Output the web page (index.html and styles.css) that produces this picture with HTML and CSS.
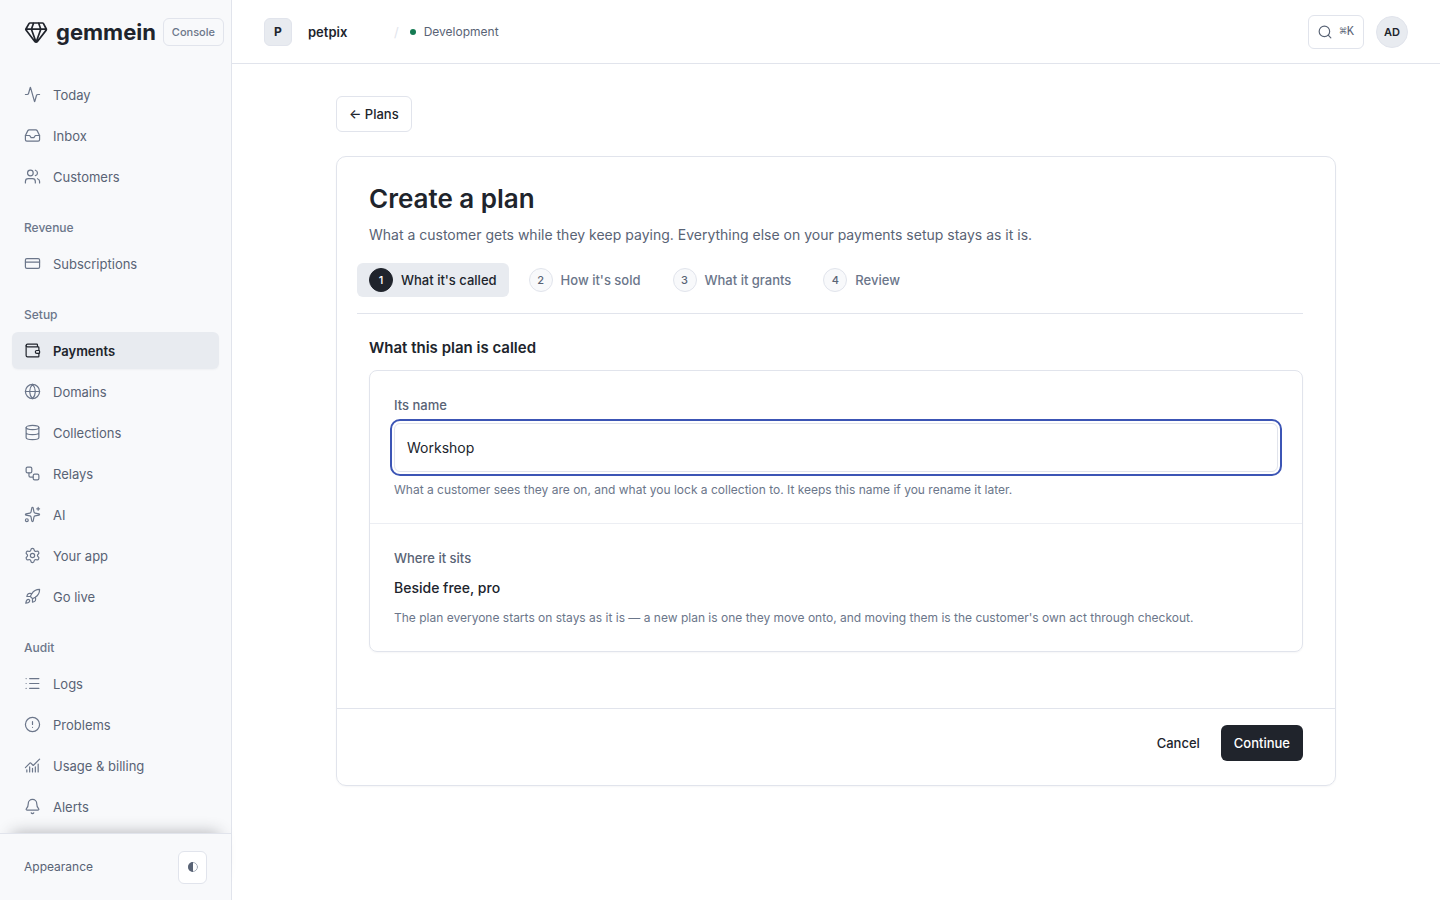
FILE: index.html
```html
<!DOCTYPE html>
<html lang="en">
<head>
<meta charset="utf-8">
<meta name="viewport" content="width=device-width, initial-scale=1">
<title>Create a plan</title>
<link rel="stylesheet" href="styles.css">
</head>
<body>
<div class="app">
  <aside class="sidebar">
    <div class="brand">
      <svg class="brand-mark" viewBox="0 0 24 24"><path d="M6 3h12.500q.6 0 1 .6L22.300 9q.3.600-.1 1.100L13.400 21.600a1.600 1.600 0 0 1-2.600 0L2 10.100Q1.600 9.600 1.900 9L5 3.600Q5.400 3 6 3zM2 9.200h20.200M9.600 3 7.400 9.200l4.700 13 4.700-13L14.600 3"/></svg>
      <span class="brand-name">gemmein</span>
      <span class="brand-tag">Console</span>
    </div>
    <nav class="nav" aria-label="Console">
      <a class="nav-item" href="#"><svg class="icon" viewBox="0 0 24 24"><path d="M22 12h-2.480a2 2 0 0 0-1.930 1.460l-2.350 8.360a.25.25 0 0 1-.48 0L9.240 2.180a.25.25 0 0 0-.48 0l-2.350 8.360A2 2 0 0 1 4.490 12H2"/></svg>Today</a>
      <a class="nav-item" href="#"><svg class="icon" viewBox="0 0 24 24"><path d="M22 12h-6l-2 3h-4l-2-3H2"/><path d="M5.450 5.110 2 12v6a2 2 0 0 0 2 2h16a2 2 0 0 0 2-2v-6l-3.450-6.890A2 2 0 0 0 16.760 4H7.240a2 2 0 0 0-1.790 1.110z"/></svg>Inbox</a>
      <a class="nav-item" href="#"><svg class="icon" viewBox="0 0 24 24"><path d="M16 21v-2a4 4 0 0 0-4-4H6a4 4 0 0 0-4 4v2"/><circle cx="9" cy="7" r="4"/><path d="M22 21v-2a4 4 0 0 0-3-3.870M16 3.130a4 4 0 0 1 0 7.750"/></svg>Customers</a>
      <h2 class="nav-label">Revenue</h2>
      <a class="nav-item" href="#"><svg class="icon" viewBox="0 0 24 24"><rect x="2" y="5" width="20" height="14" rx="2"/><path d="M2 10h20"/></svg>Subscriptions</a>
      <h2 class="nav-label">Setup</h2>
      <a class="nav-item nav-item-current" href="#" aria-current="page"><svg class="icon" viewBox="0 0 24 24"><path d="M19 7V4a1 1 0 0 0-1-1H5a2 2 0 0 0 0 4h15a1 1 0 0 1 1 1v4h-3a2 2 0 0 0 0 4h3a1 1 0 0 0 1-1v-2a1 1 0 0 0-1-1"/><path d="M3 5v14a2 2 0 0 0 2 2h15a1 1 0 0 0 1-1v-4"/></svg>Payments</a>
      <a class="nav-item" href="#"><svg class="icon" viewBox="0 0 24 24"><circle cx="12" cy="12" r="10"/><path d="M12 2a14.500 14.500 0 0 0 0 20 14.500 14.500 0 0 0 0-20M2 12h20"/></svg>Domains</a>
      <a class="nav-item" href="#"><svg class="icon" viewBox="0 0 24 24"><ellipse cx="12" cy="5" rx="9" ry="3"/><path d="M3 5v14a9 3 0 0 0 18 0V5M3 12a9 3 0 0 0 18 0"/></svg>Collections</a>
      <a class="nav-item" href="#"><svg class="icon" viewBox="0 0 24 24"><rect x="3" y="3" width="8" height="8" rx="2"/><path d="M7 11v4a2 2 0 0 0 2 2h4"/><rect x="13" y="13" width="8" height="8" rx="2"/></svg>Relays</a>
      <a class="nav-item" href="#"><svg class="icon" viewBox="0 0 24 24"><path d="M11.017 2.814a1 1 0 0 1 1.966 0l1.051 5.558a2 2 0 0 0 1.594 1.594l5.558 1.051a1 1 0 0 1 0 1.966l-5.558 1.051a2 2 0 0 0-1.594 1.594l-1.051 5.558a1 1 0 0 1-1.966 0l-1.051-5.558a2 2 0 0 0-1.594-1.594l-5.558-1.051a1 1 0 0 1 0-1.966l5.558-1.051a2 2 0 0 0 1.594-1.594zM20 2v4M22 4h-4"/><circle cx="4" cy="20" r="2"/></svg>AI</a>
      <a class="nav-item" href="#"><svg class="icon" viewBox="0 0 24 24"><path d="M9.671 4.136a2.340 2.340 0 0 1 4.659 0 2.340 2.340 0 0 0 3.319 1.915 2.340 2.340 0 0 1 2.330 4.033 2.340 2.340 0 0 0 0 3.831 2.340 2.340 0 0 1-2.330 4.033 2.340 2.340 0 0 0-3.319 1.915 2.340 2.340 0 0 1-4.659 0 2.340 2.340 0 0 0-3.320-1.915 2.340 2.340 0 0 1-2.330-4.033 2.340 2.340 0 0 0 0-3.831A2.340 2.340 0 0 1 6.350 6.051a2.340 2.340 0 0 0 3.319-1.915"/><circle cx="12" cy="12" r="3"/></svg>Your app</a>
      <a class="nav-item" href="#"><svg class="icon" viewBox="0 0 24 24"><path d="M4.500 16.500c-1.500 1.260-2 5-2 5s3.740-.5 5-2c.71-.84.7-2.130-.09-2.910a2.180 2.180 0 0 0-2.910-.09zM12 15l-3-3a22 22 0 0 1 2-3.950A12.880 12.880 0 0 1 22 2c0 2.720-.78 7.500-6 11a22.350 22.350 0 0 1-4 2z"/><path d="M9 12H4s.55-3.030 2-4c1.620-1.080 5 0 5 0M12 15v5s3.030-.55 4-2c1.080-1.620 0-5 0-5"/></svg>Go live</a>
      <h2 class="nav-label">Audit</h2>
      <a class="nav-item" href="#"><svg class="icon" viewBox="0 0 24 24"><path d="M3 5h.01M3 12h.01M3 19h.01M8 5h13M8 12h13M8 19h13"/></svg>Logs</a>
      <a class="nav-item" href="#"><svg class="icon" viewBox="0 0 24 24"><circle cx="12" cy="12" r="10"/><path d="M12 8v4M12 16h.01"/></svg>Problems</a>
      <a class="nav-item" href="#"><svg class="icon" viewBox="0 0 24 24"><path d="M12 16v5M16 14v7M20 10v11M4 18v3M8 14v7"/><path d="m22 3-8.646 8.646a.5.5 0 0 1-.708 0L9.354 8.354a.5.5 0 0 0-.707 0L2 15"/></svg>Usage &amp; billing</a>
      <a class="nav-item" href="#"><svg class="icon" viewBox="0 0 24 24"><path d="M10.268 21a2 2 0 0 0 3.464 0M3.262 15.326A1 1 0 0 0 4 17h16a1 1 0 0 0 .74-1.673C19.410 13.956 18 12.499 18 8A6 6 0 0 0 6 8c0 4.499-1.411 5.956-2.738 7.326"/></svg>Alerts</a>
    </nav>
    <div class="appearance">
      <span>Appearance</span>
      <button class="theme-button" type="button" aria-label="Change appearance"><svg class="theme-icon" viewBox="0 0 12 12"><circle cx="6" cy="6" r="4.500"/><path d="M6 1a5 5 0 0 0 0 10z"/></svg></button>
    </div>
  </aside>

  <div class="page">
    <header class="topbar">
      <span class="app-badge">P</span>
      <strong class="app-name">petpix</strong>
      <span class="slash">/</span>
      <span class="environment"><span class="dot"></span>Development</span>
      <button class="search" type="button" aria-label="Search"><svg class="search-icon" viewBox="0 0 24 24"><circle cx="11" cy="11" r="9"/><path d="m22 22-4.500-4.500"/></svg><kbd>⌘K</kbd></button>
      <button class="avatar" type="button">AD</button>
    </header>

    <main class="content">
      <a class="button button-outline" href="#">← Plans</a>
      <form class="card">
        <div class="card-body">
          <h1 class="title">Create a plan</h1>
          <p class="intro">What a customer gets while they keep paying. Everything else on your payments setup stays as it is.</p>
          <ol class="steps">
            <li class="step step-current" aria-current="step"><span class="step-number">1</span>What it's called</li>
            <li class="step"><span class="step-number">2</span>How it's sold</li>
            <li class="step"><span class="step-number">3</span>What it grants</li>
            <li class="step"><span class="step-number">4</span>Review</li>
          </ol>
          <h2 class="section-title">What this plan is called</h2>
          <div class="panel">
            <div class="panel-row">
              <label class="label" for="plan-name">Its name</label>
              <input class="input" id="plan-name" type="text" value="Workshop">
              <p class="hint">What a customer sees they are on, and what you lock a collection to. It keeps this name if you rename it later.</p>
            </div>
            <div class="panel-row">
              <h3 class="label">Where it sits</h3>
              <p class="value">Beside free, pro</p>
              <p class="hint">The plan everyone starts on stays as it is — a new plan is one they move onto, and moving them is the customer's own act through checkout.</p>
            </div>
          </div>
        </div>
        <footer class="card-footer">
          <button class="button button-plain" type="button">Cancel</button>
          <button class="button button-primary" type="submit">Continue</button>
        </footer>
      </form>
    </main>
  </div>
</div>
</body>
</html>
```
FILE: styles.css
```css
:root {
  --ink: #20242c;
  --text: #596375;
  --muted: #6b768a;
  --line: #e1e4ec;
  --soft: #e8ebf0;
  --surface: #f8f9fb;
}

* { box-sizing: border-box; }

body {
  margin: 0;
  background: #fff;
  color: var(--ink);
  font: 13px/20px Inter, "Liberation Sans", sans-serif;
}

h1, h2, h3, p, ol { margin: 0; padding: 0; }
button, input { font: inherit; color: inherit; }
button { cursor: pointer; }
a { color: inherit; text-decoration: none; }
svg { flex: none; fill: none; stroke: currentColor; stroke-linecap: round; stroke-linejoin: round; }

.app { display: grid; grid-template-columns: 232px minmax(0, 1fr); min-height: 100vh; }

/* Sidebar */
.sidebar {
  position: sticky;
  top: 0;
  display: flex;
  flex-direction: column;
  height: 100vh;
  background: var(--surface);
  border-right: 1px solid var(--line);
}
.brand { display: flex; align-items: center; height: 64px; padding: 0 7px 0 24px; }
.brand-mark { width: 24px; height: 24px; stroke-width: 1.7; }
.brand-name { margin-left: 8px; font-size: 22px; line-height: 32px; font-weight: 700; }
.brand-tag {
  margin-left: auto;
  padding: 4px 8px;
  border: 1px solid var(--line);
  border-radius: 6px;
  color: var(--muted);
  font-size: 11px;
  line-height: 18px;
  font-weight: 500;
}
.nav {
  display: flex;
  flex: 1;
  flex-direction: column;
  gap: 4px;
  min-height: 0;
  padding: 12px 12px 0;
  overflow-y: auto;
  scrollbar-width: none;
}
.nav-item {
  display: flex;
  flex: none;
  align-items: center;
  gap: 12px;
  height: 37px;
  padding: 0 12px;
  border-radius: 6px;
  color: var(--text);
}
.nav-item-current { background: var(--soft); color: var(--ink); font-weight: 600; box-shadow: 0 1px 2px #20242c0a; }
.icon { width: 17px; height: 17px; color: var(--muted); stroke-width: 1.7; }
.nav-item-current .icon { color: var(--ink); }
.nav-label { flex: none; margin: 20px 12px 4px; color: var(--muted); font-size: 12px; line-height: 18px; font-weight: 500; }
.appearance {
  position: relative;
  display: flex;
  align-items: center;
  justify-content: space-between;
  height: 67px;
  padding: 0 24px;
  border-top: 1px solid var(--line);
  background: var(--surface);
  box-shadow: 0 -12px 16px -12px #20242c55;
  color: var(--text);
  font-size: 12px;
}
.theme-button {
  display: grid;
  place-items: center;
  width: 29px;
  height: 33px;
  padding: 0;
  border: 1px solid var(--line);
  border-radius: 6px;
  background: #fff;
}
.theme-icon { width: 12px; height: 12px; stroke-width: 1; color: var(--text); }
.theme-icon circle { stroke: #a9b0bc; }
.theme-icon path { fill: currentColor; stroke: none; }

/* Top bar */
.topbar { display: flex; align-items: center; height: 64px; padding: 0 32px; border-bottom: 1px solid var(--line); }
.app-badge {
  display: grid;
  place-items: center;
  width: 28px;
  height: 28px;
  border: 1px solid var(--line);
  border-radius: 6px;
  background: var(--soft);
  font-size: 12px;
  font-weight: 700;
}
.app-name { width: 86px; margin-left: 16px; font-weight: 600; }
.slash { color: var(--line); }
.environment { display: flex; align-items: center; gap: 8px; margin-left: 11px; color: var(--text); font-size: 12px; }
.dot { width: 6px; height: 6px; border-radius: 50%; background: #147a52; }
.search {
  display: flex;
  align-items: center;
  gap: 8px;
  height: 34px;
  margin-left: auto;
  padding: 0 9px;
  border: 1px solid var(--line);
  border-radius: 6px;
  background: #fff;
  color: var(--text);
}
.search-icon { width: 14px; height: 14px; stroke-width: 2; }
.search kbd { font: 12px/16px "Liberation Mono", monospace; }
.avatar {
  width: 32px;
  height: 32px;
  margin-left: 12px;
  padding: 0;
  border: 1px solid var(--line);
  border-radius: 50%;
  background: var(--soft);
  font-size: 11px;
  font-weight: 600;
}

/* Content */
.content { max-width: 1064px; margin: 0 auto; padding: 32px; }
.button {
  display: inline-flex;
  align-items: center;
  justify-content: center;
  height: 36px;
  padding: 0 12px;
  border: 1px solid transparent;
  border-radius: 6px;
  background: transparent;
  font-weight: 500;
}
.button-outline { border-color: var(--line); background: #fff; }
.button-primary { background: var(--ink); color: #fff; }
.card { margin-top: 24px; border: 1px solid var(--line); border-radius: 10px; box-shadow: 0 1px 2px #20242c0a; }
.card-body { padding: 24px 32px 56px; }
.title { font-size: 26px; line-height: 36px; font-weight: 600; }
.intro { margin-top: 8px; color: var(--text); font-size: 14px; line-height: 20px; }
.steps {
  display: flex;
  flex-wrap: wrap;
  gap: 8px;
  margin: 18px 0 0 -12px;
  padding-bottom: 16px;
  border-bottom: 1px solid var(--line);
  list-style: none;
}
.step { display: flex; align-items: center; gap: 8px; height: 34px; padding: 0 12px; border-radius: 6px; color: var(--muted); font-weight: 500; }
.step-number {
  display: grid;
  place-items: center;
  width: 24px;
  height: 24px;
  border: 1px solid var(--line);
  border-radius: 50%;
  background: var(--surface);
  color: var(--text);
  font-size: 11px;
}
.step-current { background: var(--soft); color: var(--ink); }
.step-current .step-number { border-color: var(--ink); background: var(--ink); color: #fff; }
.section-title { margin-top: 22px; font-size: 15px; line-height: 24px; font-weight: 600; }
.panel { margin-top: 10px; border: 1px solid var(--line); border-radius: 8px; box-shadow: 0 1px 2px #20242c0a; }
.panel-row { display: flex; flex-direction: column; gap: 8px; padding: 24px; }
.panel-row + .panel-row { border-top: 1px solid #eceef3; }
.label { color: var(--text); font-size: 13px; line-height: 20px; font-weight: 500; }
.input {
  width: 100%;
  height: 49px;
  padding: 0 12px;
  border: 1px solid var(--line);
  border-radius: 6px;
  outline: 2px solid #3c55b5;
  outline-offset: 2px;
  background: #fff;
  font-size: 14px;
}
.value { font-size: 14px; line-height: 24px; font-weight: 500; }
.hint { color: var(--muted); font-size: 12px; line-height: 19px; }
.card-footer { display: flex; justify-content: flex-end; gap: 8px; padding: 16px 32px 24px; border-top: 1px solid var(--line); }
```
